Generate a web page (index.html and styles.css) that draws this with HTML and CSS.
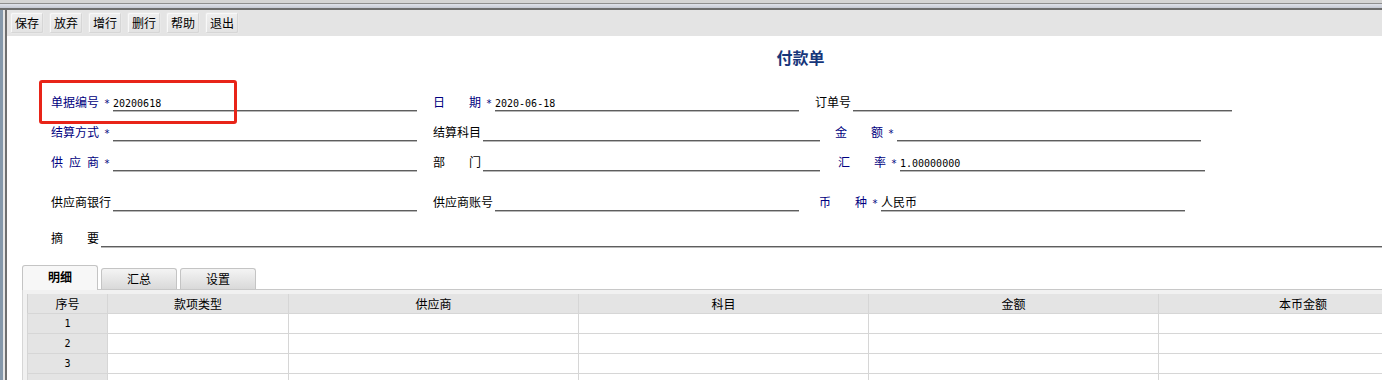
FILE: index.html
```html
<!DOCTYPE html>
<html lang="zh-CN">
  <head>
    <meta charset="utf-8" />
    <title>付款单</title>
    <link rel="stylesheet" href="styles.css">
  </head>
  <body>
    <div class="topbar"></div>
    <div class="window">
      <div class="side"></div>
      <div class="main">
        <div class="toolbar">
          <button class="tool">保存</button>
          <button class="tool">放弃</button>
          <button class="tool">增行</button>
          <button class="tool">删行</button>
          <button class="tool">帮助</button>
          <button class="tool">退出</button>
        </div>
        <div class="sheet">
          <h1 class="title">付款单</h1>

          <div class="row row-1">
            <div class="field w366">
              <span class="label req">单据编号</span><span class="star">*</span>
              <span class="line"><span class="num">20200618</span></span>
            </div>
            <div class="field w366 gap16">
              <span class="label req spaced">日期</span><span class="star">*</span>
              <span class="line"><span class="num">2020-06-18</span></span>
            </div>
            <div class="field w417 gap16">
              <span class="label">订单号</span>
              <span class="line"></span>
            </div>
          </div>

          <div class="row row-2">
            <div class="field w366">
              <span class="label req">结算方式</span><span class="star">*</span>
              <span class="line"></span>
            </div>
            <div class="field w387 gap16">
              <span class="label">结算科目</span>
              <span class="line"></span>
            </div>
            <div class="field w366 gap15">
              <span class="label req spaced">金额</span><span class="star">*</span>
              <span class="line"></span>
            </div>
          </div>

          <div class="row row-3">
            <div class="field w366">
              <span class="label req spaced">供应商</span><span class="star">*</span>
              <span class="line"></span>
            </div>
            <div class="field w387 gap16">
              <span class="label spaced">部门</span>
              <span class="line"></span>
            </div>
            <div class="field w367 gap18">
              <span class="label req spaced">汇率</span><span class="star">*</span>
              <span class="line"><span class="num">1.00000000</span></span>
            </div>
          </div>

          <div class="row row-4">
            <div class="field w366">
              <span class="label">供应商银行</span>
              <span class="line"></span>
            </div>
            <div class="field w366 gap16">
              <span class="label">供应商账号</span>
              <span class="line"></span>
            </div>
            <div class="field w366 gap20">
              <span class="label req spaced">币种</span><span class="star">*</span>
              <span class="line"><span class="val">人民币</span></span>
            </div>
          </div>

          <div class="row row-5">
            <div class="field wide">
              <span class="label spaced">摘要</span>
              <span class="line"></span>
            </div>
          </div>

          <div class="tabs">
            <div class="tab active">明细</div>
            <div class="tab">汇总</div>
            <div class="tab">设置</div>
          </div>
          <div class="panel">
            <table class="grid">
              <colgroup>
                <col style="width: 80px" />
                <col style="width: 181px" />
                <col style="width: 290px" />
                <col style="width: 290px" />
                <col style="width: 290px" />
                <col style="width: 289px" />
              </colgroup>
              <thead>
                <tr>
                  <th>序号</th>
                  <th>款项类型</th>
                  <th>供应商</th>
                  <th>科目</th>
                  <th>金额</th>
                  <th>本币金额</th>
                </tr>
              </thead>
              <tbody>
                <tr><td class="no">1</td><td></td><td></td><td></td><td></td><td></td></tr>
                <tr><td class="no">2</td><td></td><td></td><td></td><td></td><td></td></tr>
                <tr><td class="no">3</td><td></td><td></td><td></td><td></td><td></td></tr>
                <tr><td class="no"></td><td></td><td></td><td></td><td></td><td></td></tr>
              </tbody>
            </table>
          </div>
        </div>
      </div>
    </div>
    <div class="mark"></div>
  </body>
</html>
```

FILE: styles.css
```css
body {
  margin: 0;
  width: 1382px;
  height: 380px;
  overflow: hidden;
  position: relative;
  background-color: #ffffff;
  font-family: "Noto Sans CJK SC", sans-serif;
  font-size: 12px;
  color: #000000;
}

.topbar {
  height: 10px;
  background: linear-gradient(
    #d4d4d4 0,
    #d4d4d4 3px,
    #8e8e8e 3px,
    #8e8e8e 4px,
    #dfe2ea 4px,
    #c4c8d2 8px,
    #6c6c6c 8px,
    #6c6c6c 10px
  );
}

.window {
  display: flex;
  height: 370px;
}

.side {
  width: 3px;
  flex: 0 0 3px;
  background-color: #8699ab;
  border-right: 2px solid #e6e6e6;
}

.main {
  flex: 1;
  border-left: 2px solid #6f6f6f;
  min-width: 0;
  overflow: hidden;
}

.toolbar {
  height: 26px;
  box-sizing: border-box;
  padding: 2px 0 0 3px;
  background-color: #e4e4e4;
  display: flex;
  gap: 5px;
}

.tool {
  width: 34px;
  height: 22px;
  padding: 0;
  margin: 0;
  border: 1px solid #e8e8e8;
  border-radius: 2px;
  background: linear-gradient(#efefef, #e2e2e2);
  box-shadow: inset -1px -1px 0 #d6d6d6, inset 1px 1px 0 #f8f8f8;
  font-family: "Noto Sans CJK SC", sans-serif;
  font-size: 12px;
  line-height: 20px;
  color: #000000;
}

.sheet {
  padding-left: 44px;
}

.title {
  margin: 0;
  padding: 11px 0 0 168px;
  height: 20px;
  text-align: center;
  font-size: 16px;
  line-height: 20px;
  font-weight: bold;
  color: #17367a;
}

.row {
  display: flex;
  height: 18px;
}

.row-1 { margin-top: 26px; }
.row-2 { margin-top: 12px; }
.row-3 { margin-top: 12px; }
.row-4 { margin-top: 22px; }
.row-5 { margin-top: 18px; }

.field {
  display: flex;
  height: 18px;
  flex: 0 0 auto;
}

.w366 { width: 366px; }
.w367 { width: 367px; }
.w387 { width: 387px; }
.w417 { width: 417px; }
.wide { width: 1400px; }

.gap15 { margin-left: 15px; }
.gap16 { margin-left: 16px; }
.gap18 { margin-left: 18px; }
.gap20 { margin-left: 20px; }

.label {
  line-height: 18px;
  white-space: nowrap;
  margin-right: 2px;
}

.label.req {
  color: #000080;
  margin-right: 0;
}

.label.spaced {
  width: 48px;
  text-align: justify;
  text-align-last: justify;
}

.star {
  width: 9px;
  padding-left: 5px;
  font-family: "DejaVu Sans Mono", monospace;
  font-size: 10px;
  line-height: 18px;
  padding-top: 2px;
  color: #000080;
}

.line {
  flex: 1;
  height: 17px;
  border-bottom: 1px solid #5e5e5e;
  box-shadow: 0 1px 0 #b8b8b8;
  line-height: 17px;
  white-space: nowrap;
}

.num {
  font-family: "DejaVu Sans Mono", monospace;
  font-size: 10px;
}

.val {
  font-size: 12px;
}

.tabs {
  display: flex;
  align-items: flex-end;
  gap: 3px;
  height: 24px;
  margin: 18px 0 0 -29px;
  position: relative;
  z-index: 1;
}

.tab {
  width: 74px;
  height: 20px;
  border: 1px solid #c4c4c4;
  border-bottom: none;
  border-radius: 3px 3px 0 0;
  background: linear-gradient(#f4f4f4, #d9d9d9);
  text-align: center;
  line-height: 20px;
}

.tab.active {
  height: 24px;
  margin-bottom: -1px;
  background: #f7f7f7;
  font-weight: bold;
  line-height: 22px;
}

.panel {
  margin-left: -29px;
  border-top: 1px solid #c8c8c8;
  border-left: 1px solid #d6d6d6;
  background-color: #f1f1f1;
  padding: 4px 0 0 4px;
}

.grid {
  table-layout: fixed;
  border-collapse: collapse;
  width: 1420px;
  background-color: #ffffff;
}

.grid th,
.grid td {
  height: 19px;
  padding: 0;
  border: 1px solid #d6d6d6;
  border-top: none;
  text-align: center;
  font-weight: normal;
  font-size: 12px;
  line-height: 19px;
}

.grid th {
  background-color: #e4e4e4;
  border-left-color: #d0d0d0;
}

.grid td.no {
  background-color: #e4e4e4;
  font-family: "DejaVu Sans Mono", monospace;
  font-size: 10px;
}

.mark {
  position: absolute;
  left: 39px;
  top: 80px;
  width: 192px;
  height: 38px;
  border: 3px solid #e82418;
  border-radius: 3px;
}
```
